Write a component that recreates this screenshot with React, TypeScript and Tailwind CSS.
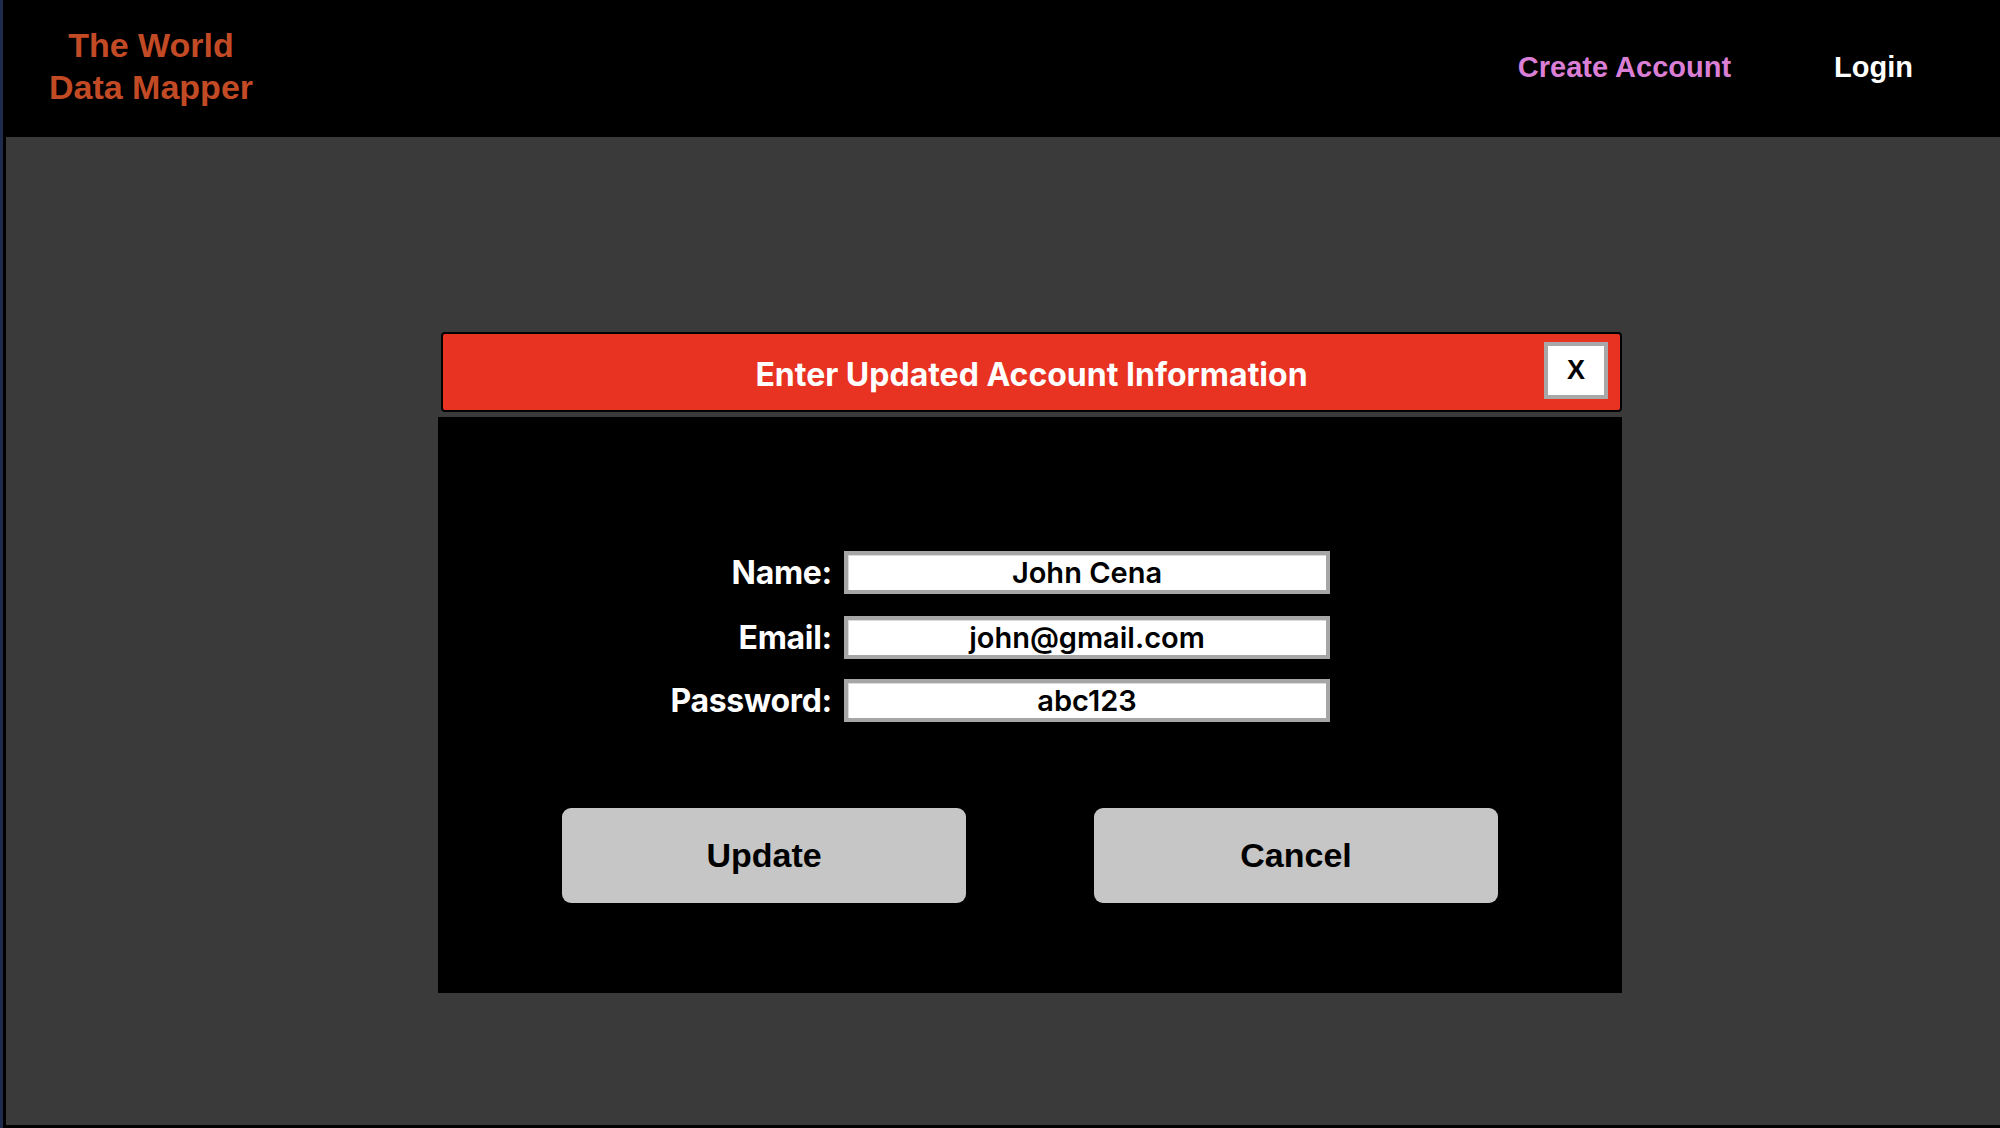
import React from "react";

const arial = { fontFamily: '"Liberation Sans", Arial, sans-serif' };

function Field({ label, value }: { label: string; value: string }) {
  return (
    <div className="flex items-center">
      <div className="w-[250px] flex justify-end">
        <span className="inline-block text-white font-bold text-[32px] leading-none tracking-[-0.3px] font-['Inter',sans-serif]">
          {label}
        </span>
      </div>
      <div className="ml-[12px] w-[486px] h-[43px] bg-white border-4 border-[#a6a6a6] shadow-[inset_1px_1px_0_#dcdcdc] flex items-center justify-center">
        <span className="inline-block text-black font-semibold text-[29px] leading-none font-['Inter',sans-serif]">
          {value}
        </span>
      </div>
    </div>
  );
}

export default function App() {
  return (
    <div className="w-[2000px] h-[1128px] bg-black flex flex-col pl-[3px] pb-[3px] border-l-[3px] border-[#1f2b4a] box-border">
      <header className="h-[137px] bg-black flex items-center justify-between shrink-0">
        <div
          className="ml-[41px] -mt-[5px] text-[#c24a25] text-[34px] font-bold leading-[42px] text-center w-[208px]"
          style={arial}
        >
          <div>The World</div>
          <div>Data Mapper</div>
        </div>
        <nav className="flex items-center -mt-[2px]" style={arial}>
          <span className="text-[#db7fd6] text-[29px] font-bold">Create Account</span>
          <span className="ml-[103px] mr-[87px] text-white text-[29px] font-bold">Login</span>
        </nav>
      </header>
      <main className="flex-1 bg-[#3a3a3a] pl-[432px] pt-[195px]">
        <div className="w-[1184px]">
          <div className="ml-[3px] w-[1181px] h-[80px] bg-[#e83323] border-2 border-black rounded-[4px] relative flex items-center justify-center">
            <span className="text-white font-bold text-[32px] leading-none mt-[5px] font-['Inter',sans-serif]">
              Enter Updated Account Information
            </span>
            <div className="absolute right-[12px] top-[8px] w-[64px] h-[57px] bg-white border-4 border-[#a8a8a8] flex items-center justify-center">
              <span className="text-black font-bold text-[27px] leading-none" style={arial}>
                X
              </span>
            </div>
          </div>
          <div className="mt-[5px] h-[576px] bg-black flex flex-col">
            <div className="pt-[134px] pl-[144px] flex flex-col">
              <Field label="Name:" value="John Cena" />
              <div className="mt-[22px]">
                <Field label="Email:" value="john@gmail.com" />
              </div>
              <div className="mt-[20px]">
                <Field label="Password:" value="abc123" />
              </div>
            </div>
            <div className="mt-[86px] flex px-[124px] justify-between">
              <div
                className="w-[404px] h-[95px] bg-[#c6c6c6] rounded-[9px] flex items-center justify-center text-black text-[34px] font-bold"
                style={arial}
              >
                Update
              </div>
              <div
                className="w-[404px] h-[95px] bg-[#c6c6c6] rounded-[9px] flex items-center justify-center text-black text-[34px] font-bold"
                style={arial}
              >
                Cancel
              </div>
            </div>
          </div>
        </div>
      </main>
    </div>
  );
}
